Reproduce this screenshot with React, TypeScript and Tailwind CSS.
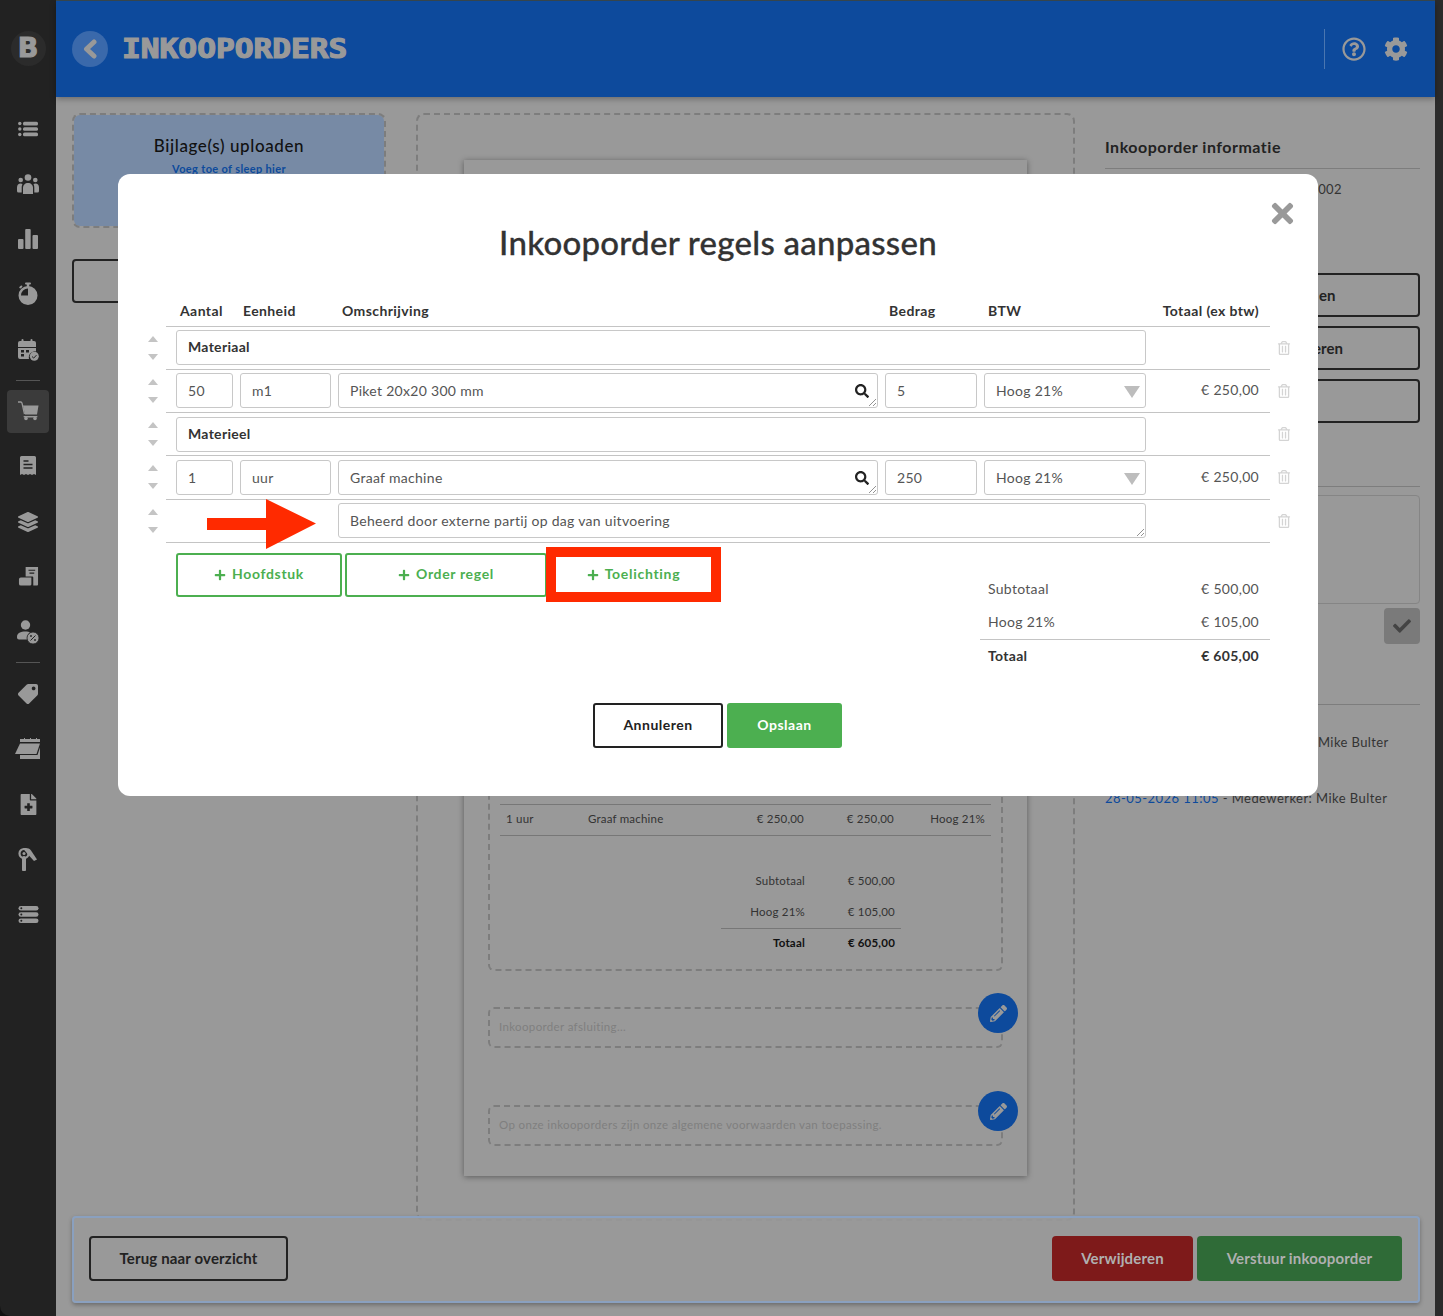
import type { ReactNode } from "react"
import {
  FaCheck,
  FaCog,
  FaFileMedical,
  FaLayerGroup,
  FaPencilAlt,
  FaPlus,
  FaRegQuestionCircle,
  FaRegTrashAlt,
  FaSearch,
  FaTag,
  FaTimes,
} from "react-icons/fa"

const font = "font-['Lato','Noto_Sans',sans-serif]"

function ListIcon() {
  return (
    <svg viewBox="0 0 20 16" className="h-[16px] w-[20px]" fill="currentColor">
      <circle cx="1.800" cy="2.500" r="1.700" />
      <circle cx="1.800" cy="8" r="1.700" />
      <circle cx="1.800" cy="13.500" r="1.700" />
      <rect x="5" y="0.800" width="15" height="3.600" rx="1.500" />
      <rect x="5" y="6.200" width="15" height="3.600" rx="1.500" />
      <rect x="5" y="11.600" width="15" height="3.600" rx="1.500" />
    </svg>
  )
}

function TeamIcon() {
  return (
    <svg viewBox="0 0 22 20" className="h-[20px] w-[22px]" fill="currentColor">
      <circle cx="11" cy="3.500" r="3.300" />
      <circle cx="3.700" cy="6" r="2.300" />
      <circle cx="18.300" cy="6" r="2.300" />
      <path d="M6 20v-6c0-3 2-5 5-5s5 2 5 5v6z" />
      <path d="M0 17v-3.500C0 11 1.500 9.500 3.500 9.500c.8 0 1.500.2 2 .6C5 11 4.700 12.500 4.700 14v4.500H1.500A1.500 1.500 0 0 1 0 17z" />
      <path d="M22 17v-3.500c0-2.500-1.500-4-3.500-4-.8 0-1.500.2-2 .6.500.9.800 2.400.800 3.900v4.500h3.200a1.500 1.500 0 0 0 1.500-1.500z" />
    </svg>
  )
}

function Bars() {
  return (
    <svg viewBox="0 0 22 22" className="h-[22px] w-[22px]" fill="currentColor">
      <rect x="1" y="11" width="5.500" height="10" rx="1" />
      <rect x="8.200" y="1" width="5.500" height="20" rx="1" />
      <rect x="15.500" y="7" width="5.500" height="14" rx="1" />
    </svg>
  )
}

function TimerIcon() {
  return (
    <svg viewBox="0 0 22 24" className="h-[24px] w-[22px]" fill="currentColor">
      <rect x="8" y="0.500" width="6" height="2" rx="1" />
      <rect x="9.800" y="2" width="2.400" height="3" />
      <rect x="2" y="3.800" width="3.500" height="2" rx="1" transform="rotate(-40 4 4.800)" />
      <path fillRule="evenodd" d="M11 4a9.500 9.500 0 1 1 0 19 9.500 9.500 0 0 1 0-19zm0 2.500a7 7 0 0 0-7 7h7z" />
    </svg>
  )
}

function CalendarBadge() {
  return (
    <svg viewBox="0 0 22 22" className="h-[22px] w-[22px]" fill="currentColor">
      <rect x="4.500" y="0" width="2" height="4" rx="1" />
      <rect x="13.500" y="0" width="2" height="4" rx="1" />
      <path d="M1 4a2 2 0 0 1 2-2h14a2 2 0 0 1 2 2v4H1z" />
      <path d="M1 9h18v3.500a6 6 0 0 0-7 7.500H3a2 2 0 0 1-2-2z" />
      <rect x="4" y="11" width="3" height="2.500" fill="#222" />
      <rect x="9" y="11" width="3" height="2.500" fill="#222" />
      <rect x="4" y="15" width="3" height="2.500" fill="#222" />
      <circle cx="17.300" cy="17.300" r="4.500" />
      <path d="M15 17.500l1.700 1.600 2.800-3" stroke="#222" strokeWidth="1" fill="none" />
    </svg>
  )
}

function CartIcon() {
  return (
    <svg viewBox="0 0 22 20" className="h-[20px] w-[22px]" fill="currentColor">
      <path d="M1 1h3l1 1 2.500 11" stroke="currentColor" strokeWidth="1.300" fill="none" />
      <path d="M6 4.500h15.500l-1.500 9H8z" />
      <rect x="6.500" y="15" width="14" height="1.600" rx="0.800" />
      <circle cx="9" cy="17.500" r="1.800" />
      <circle cx="18" cy="17.500" r="1.800" />
    </svg>
  )
}

function ReceiptIcon() {
  return (
    <svg viewBox="0 0 20 20" className="h-[20px] w-[20px]" fill="currentColor">
      <path d="M2 1.500A1.500 1.500 0 0 1 3.500 0h13A1.500 1.500 0 0 1 18 1.500V19l-2-1-2 1-2-1-2 1-2-1-2 1-2-1-2 1z" />
      <path d="M5.500 5h5M5.500 8.500h9M5.500 12h9" stroke="#222" strokeWidth="1.400" />
    </svg>
  )
}

function Invoices() {
  return (
    <svg viewBox="0 0 22 22" className="h-[21px] w-[21px]" fill="currentColor">
      <path d="M8 1h13v18.500a1 1 0 0 1-1 1h-4V12a1 1 0 0 0-1-1H8z" />
      <path d="M1 14a2 2 0 0 1 2-2h11v7a1.500 1.500 0 0 1-1.500 1.500H3a2 2 0 0 1-2-2z" />
      <path d="M11 4.500h7M12 7.500h5" stroke="#222" strokeWidth="1.200" />
    </svg>
  )
}

function UserPercent() {
  return (
    <svg viewBox="0 0 24 25" className="h-[25px] w-[24px]" fill="currentColor">
      <circle cx="9.500" cy="5" r="4.700" />
      <path d="M1 17c0-4 3.500-5.500 8.500-5.500 2 0 3.500.3 4.500.8a7.500 7.500 0 0 0-2.500 7.200H3a2 2 0 0 1-2-2z" />
      <circle cx="17" cy="18" r="6" stroke="#222" strokeWidth="0.800" />
      <path d="M14.500 20.500l5-5" stroke="#222" strokeWidth="1" />
      <circle cx="15" cy="16" r="0.900" fill="#222" />
      <circle cx="19" cy="20" r="0.900" fill="#222" />
    </svg>
  )
}

function Planner() {
  return (
    <svg viewBox="8 6 26 23" className="h-[23px] w-[26px]" fill="currentColor">
      <path d="M13 8h4V7h1v1h5V7h1v1h5V7h1v1h3v3H13z" />
      <path d="M13 12.500h20l-3.500 10.500H8z" />
      <path d="M13 24h17.500L33 16.500V28H13z" />
    </svg>
  )
}

function Tools() {
  return (
    <svg viewBox="0 0 20 24" className="h-[24px] w-[20px]">
      <circle cx="6" cy="6.500" r="4.500" fill="none" stroke="currentColor" strokeWidth="2.200" />
      <circle cx="6" cy="6.500" r="1.500" fill="currentColor" />
      <path d="M6 11v11.500" stroke="currentColor" strokeWidth="4" strokeLinecap="round" />
      <path d="M5 1.500c3-1 6-.5 8 2l6 9-3 1.500-6-6.500" fill="currentColor" />
    </svg>
  )
}

function ServerIcon() {
  return (
    <svg viewBox="0 0 20 17" className="h-[17px] w-[21px]" fill="currentColor">
      <rect x="0" y="0" width="20" height="4.600" rx="2.300" />
      <rect x="0" y="6.200" width="20" height="4.600" rx="2.300" />
      <rect x="0" y="12.400" width="20" height="4.600" rx="2.300" />
      <circle cx="2.800" cy="2.300" r="1" fill="#222" />
      <circle cx="2.800" cy="8.500" r="1" fill="#222" />
      <circle cx="2.800" cy="14.700" r="1" fill="#222" />
    </svg>
  )
}

const navTop = [<ListIcon />, <TeamIcon />, <Bars />, <TimerIcon />, <CalendarBadge />]
const navMiddle = [<CartIcon />, <ReceiptIcon />, <FaLayerGroup size={20} />, <Invoices />, <UserPercent />]
const navBottom = [
  <FaTag size={20} className="scale-x-[-1]" />,
  <Planner />,
  <FaFileMedical size={21} />,
  <Tools />,
  <ServerIcon />,
]

function NavItem({ children, active }: { children: ReactNode; active?: boolean }) {
  return (
    <div
      className={`mx-[7px] flex h-[43px] items-center justify-center rounded-[4px] text-[#999] ${
        active ? "bg-[#3b3b3b]" : ""
      }`}
    >
      {children}
    </div>
  )
}

function Sidebar() {
  return (
    <aside className="flex w-[56px] shrink-0 flex-col rounded-bl-[10px] bg-[#222]">
      <div className="flex h-[96px] items-center justify-center">
        <div className="flex h-[35px] w-[35px] items-center justify-center rounded-full bg-[#2b2b2b] font-['DejaVu_Sans',sans-serif] text-[27px] font-bold text-[#999] [-webkit-text-stroke:1px_#999]">
          B
        </div>
      </div>
      <nav className="flex flex-col gap-[12.250px] pt-[11px]">
        {navTop.map((icon, i) => (
          <NavItem key={i}>{icon}</NavItem>
        ))}
        <div className="mx-[16px] my-[-3.500px] h-px bg-[#555]" />
        {navMiddle.map((icon, i) => (
          <NavItem key={i} active={i === 0}>
            {icon}
          </NavItem>
        ))}
        <div className="mx-[16px] my-[-3.500px] h-px bg-[#555]" />
        {navBottom.map((icon, i) => (
          <NavItem key={i}>{icon}</NavItem>
        ))}
      </nav>
    </aside>
  )
}

function Header() {
  return (
    <header className="z-10 flex h-[96px] shrink-0 items-center bg-[#0d4a9c] pr-[27px] pl-[16px] shadow-[0_2px_6px_rgba(0,0,0,0.3)]">
      <div className="flex h-[36px] w-[36px] items-center justify-center rounded-full bg-[#3a69ab] text-[#999]">
        <svg viewBox="0 0 16 20" className="h-[20px] w-[16px]" fill="none" stroke="currentColor" strokeWidth="5" strokeLinecap="round" strokeLinejoin="round">
          <path d="M12 3l-7.500 7 7.500 7" />
        </svg>
      </div>
      <h1 className="ml-[14px] origin-left scale-x-[1.2] font-['DejaVu_Sans_Mono',monospace] text-[26px] leading-none font-bold text-[#999] [-webkit-text-stroke:1.200px_#999]">
        INKOOPORDERS
      </h1>
      <div className="ml-auto h-[40px] w-px bg-[#4a76b0]" />
      <FaRegQuestionCircle size={24} className="ml-[17px] text-[#999]" />
      <FaCog size={24} className="ml-[18px] text-[#999]" />
    </header>
  )
}

function LeftColumn() {
  return (
    <div className="flex w-[314px] shrink-0 flex-col">
      <div className="h-[115px] rounded-[8px] border-2 border-dashed border-[#7d7d7d] bg-[#778aa5] bg-clip-padding pt-[20px] text-center">
        <p className="text-[17px] leading-[22px] font-medium tracking-[0.6px] text-[#111]">Bijlage(s) uploaden</p>
        <p className="mt-[5px] text-[11px] leading-[14px] font-bold tracking-[0.35px] text-[#0d4a9c]">Voeg toe of sleep hier</p>
      </div>
      <div className="mt-[31px] h-[44px] rounded-[4px] border-2 border-[#222]" />
    </div>
  )
}

function DashedNote({ text }: { text: string }) {
  return (
    <div className="relative h-[41px] rounded-[6px] border-2 border-dashed border-[#7d7d7d] pt-[10px] pl-[9px] text-[11.500px] leading-[16px] tracking-[0.35px] text-[#7f7f7f]">
      {text}
      <div className="absolute top-[-16px] right-[-17px] flex h-[40px] w-[40px] items-center justify-center rounded-full bg-[#0d4a9c] text-[#999]">
        <FaPencilAlt size={17} />
      </div>
    </div>
  )
}

function PaperRow({ label, value, bold }: { label: string; value: string; bold?: boolean }) {
  return (
    <div className={`flex items-center justify-end pb-[2px] ${bold ? "h-[29px] font-bold text-[#111]" : "h-[31px] text-[#333]"}`}>
      <span>{label}</span>
      <span className="mr-[96px] ml-[24px] w-[66px] text-right">{value}</span>
    </div>
  )
}

function Document() {
  return (
    <div className="h-[1108px] w-[659px] shrink-0 rounded-[8px] border-2 border-dashed border-[#7d7d7d] pt-[45px] pr-[46px] pl-[46px]">
      <div className="h-[1016px] bg-[#999] pt-[140px] pr-[24px] pl-[24px] shadow-[0_1px_6px_rgba(0,0,0,0.4)]">
        <div className="flex h-[671px] flex-col justify-end rounded-[6px] border-2 border-dashed border-[#7d7d7d] px-[10px] pb-[11px] text-[11.500px] tracking-[0.2px]">
          <div className="flex h-[32px] items-center border-y border-[#777] px-[6px] pb-[2px] text-[#333]">
            <span className="w-[82px]">1 uur</span>
            <span className="w-[150px]">Graaf machine</span>
            <span className="w-[66px] text-right">€ 250,00</span>
            <span className="ml-[24px] w-[66px] text-right">€ 250,00</span>
            <span className="ml-auto">Hoog 21%</span>
          </div>
          <div className="mt-[30px]">
            <PaperRow label="Subtotaal" value="€ 500,00" />
            <PaperRow label="Hoog 21%" value="€ 105,00" />
            <div className="mr-[90px] ml-[221px] h-px bg-[#777]" />
            <PaperRow label="Totaal" value="€ 605,00" bold />
          </div>
        </div>
        <div className="mt-[36px]">
          <DashedNote text="Inkooporder afsluiting..." />
        </div>
        <div className="mt-[57px]">
          <DashedNote text="Op onze inkooporders zijn onze algemene voorwaarden van toepassing." />
        </div>
      </div>
    </div>
  )
}

function RightColumn() {
  return (
    <div className="ml-[30px] flex w-[315px] shrink-0 flex-col text-[#222]">
      <h2 className="pt-[22px] text-[16px] leading-[24px] font-bold tracking-[0.5px]">Inkooporder informatie</h2>
      <div className="mt-[9px] h-px bg-[#7d7d7d]" />
      <p className="mt-[11px] pr-[78px] text-right text-[13px] leading-[18px] tracking-[0.4px] text-[#333]">002</p>
      <div className="mt-[75px] flex flex-col gap-[9px] text-[15px] font-bold">
        <div className="flex h-[44px] items-center rounded-[4px] border-2 border-[#222] pl-[212px]">en</div>
        <div className="flex h-[44px] items-center rounded-[4px] border-2 border-[#222] pl-[206px]">eren</div>
        <div className="h-[44px] rounded-[4px] border-2 border-[#222]" />
      </div>
      <div className="mt-[63px] h-px bg-[#7d7d7d]" />
      <div className="mt-[8px] h-[109px] rounded-[4px] border border-[#858585]" />
      <div className="mt-[4px] flex h-[36px] w-[36px] items-center justify-center self-end rounded-[4px] bg-[#7a7a7a] text-[#444]">
        <FaCheck size={18} />
      </div>
      <div className="mt-[60px] h-px bg-[#7d7d7d]" />
      <p className="mt-[28px] pl-[213px] text-[13px] leading-[18px] tracking-[0.4px] text-[#333]">Mike Bulter</p>
      <p className="mt-[38px] text-[13px] leading-[18px] tracking-[0.45px] text-[#333]">
        <span className="text-[#0d4a9c]">28-05-2026 11:05</span> - Medewerker: Mike Bulter
      </p>
    </div>
  )
}

function Footer() {
  return (
    <div className="absolute top-[1216px] left-[72px] flex h-[87px] w-[1348px] items-start rounded-[4px] border-2 border-[#8aa0bf] bg-[#999]/90 pt-[18px] pr-[16px] pl-[15px] text-[15px] font-bold tracking-[0.15px] shadow-[0_2px_4px_rgba(0,0,0,0.3)]">
      <div className="flex h-[45px] w-[199px] items-center justify-center rounded-[4px] border-2 border-[#222] text-[#222]">
        Terug naar overzicht
      </div>
      <div className="ml-auto flex h-[45px] w-[141px] items-center justify-center rounded-[4px] bg-[#7e1a1a] text-[#b0b0b0]">
        Verwijderen
      </div>
      <div className="ml-[4px] flex h-[45px] w-[205px] items-center justify-center rounded-[4px] bg-[#2f6b37] text-[#b0b0b0]">
        Verstuur inkooporder
      </div>
    </div>
  )
}

function Grip() {
  return (
    <svg viewBox="0 0 8 8" className="absolute right-px bottom-px h-[8px] w-[8px]" stroke="#777" strokeWidth="0.8">
      <path d="M1 8l7-7M5 8l3-3" />
    </svg>
  )
}

function Field({ children, bold, grip, icon, arrow }: { children?: ReactNode; bold?: boolean; grip?: boolean; icon?: boolean; arrow?: boolean }) {
  return (
    <div
      className={`relative flex h-[35px] items-center rounded-[3px] border border-[#c8c8c8] bg-white pl-[11px] ${
        bold ? "pb-[2px] font-bold text-[#333]" : "text-[#555]"
      }`}
    >
      {children}
      {icon && <FaSearch size={14} className="absolute top-[10px] right-[8px] text-[#222]" />}
      {arrow && <div className="absolute top-[12px] right-[5px] h-0 w-0 border-x-[8px] border-t-[12px] border-x-transparent border-t-[#bdbdbd]" />}
      {grip && <Grip />}
    </div>
  )
}

function Mover() {
  return (
    <div className="mb-[2px] flex w-[48px] shrink-0 flex-col items-end gap-[12px] pr-[8px]">
      <div className="h-0 w-0 border-x-[5px] border-b-[6px] border-x-transparent border-b-[#c4c4c4]" />
      <div className="h-0 w-0 border-x-[5px] border-t-[6px] border-x-transparent border-t-[#c4c4c4]" />
    </div>
  )
}

function Row({ children, total, tall, low }: { children: ReactNode; total?: string; tall?: boolean; low?: boolean }) {
  return (
    <div className={`flex items-center ${tall ? "h-[44px]" : "h-[43px]"}`}>
      <Mover />
      <div
        className={`grid h-full w-[1104px] grid-cols-[57px_91px_540px_92px_162px_1fr] items-start gap-x-[7px] border-b border-[#c4c4c4] pr-[11px] pl-[10px] ${
          low ? "pt-[4px]" : "pt-[3px]"
        }`}
      >
        {children}
        <span className="col-start-6 -mt-px text-right leading-[35px] text-[#555]">{total}</span>
      </div>
      <FaRegTrashAlt size={14} className="mb-[2px] ml-[7px] text-[#d4d4d4]" />
    </div>
  )
}

function GreenButton({ label, width }: { label: string; width: string }) {
  return (
    <div className={`flex h-[44px] ${width} items-center justify-center gap-[6px] rounded-[3px] border-2 border-[#4caf50] pb-[3px] font-bold tracking-[0.65px] text-[#4caf50]`}>
      <FaPlus size={12} className="mt-[3px]" />
      {label}
    </div>
  )
}

function Modal() {
  return (
    <div className="absolute top-[174px] left-[118px] z-20 h-[622px] w-[1200px] rounded-[12px] bg-white text-[14px] tracking-[0.3px]">
      <FaTimes size={31} className="absolute top-[24px] right-[20px] text-[#999]" />
      <h2 className="pt-[46px] text-center text-[33px] leading-[44px] font-medium tracking-[0.25px] text-[#333] [-webkit-text-stroke:0.3px_#333]">
        Inkooporder regels aanpassen
      </h2>

      <div className="mt-[30px] ml-[48px] grid h-[33px] w-[1104px] grid-cols-[63px_99px_547px_99px_1fr_auto] items-center border-b border-[#c4c4c4] pr-[11px] pl-[14px] font-bold tracking-[0.4px] text-[#333]">
        <span>Aantal</span>
        <span>Eenheid</span>
        <span>Omschrijving</span>
        <span>Bedrag</span>
        <span>BTW</span>
        <span>Totaal (ex btw)</span>
      </div>

      <Row>
        <div className="col-span-5">
          <Field bold>Materiaal</Field>
        </div>
      </Row>
      <Row total="€ 250,00">
        <Field>50</Field>
        <Field>m1</Field>
        <Field icon grip>Piket 20x20 300 mm</Field>
        <Field>5</Field>
        <Field arrow>Hoog 21%</Field>
      </Row>
      <Row low>
        <div className="col-span-5">
          <Field bold>Materieel</Field>
        </div>
      </Row>
      <Row total="€ 250,00" tall low>
        <Field>1</Field>
        <Field>uur</Field>
        <Field icon grip>Graaf machine</Field>
        <Field>250</Field>
        <Field arrow>Hoog 21%</Field>
      </Row>
      <Row>
        <div className="col-span-3 col-start-3">
          <Field grip>Beheerd door externe partij op dag van uitvoering</Field>
        </div>
      </Row>

      <div className="mt-[10px] ml-[58px] flex items-start">
        <GreenButton label="Hoofdstuk" width="w-[166px]" />
        <div className="ml-[3px]">
          <GreenButton label="Order regel" width="w-[202px]" />
        </div>
        <div className="-mt-[6px] -ml-px flex h-[55px] w-[175px] items-center justify-center border-[10px] border-[#ff2a00] pb-[2px] font-bold tracking-[0.7px] text-[#4caf50]">
          <FaPlus size={12} className="mt-[2px] mr-[6px]" />
          Toelichting
        </div>
        <div className="mt-[19px] ml-[259px] w-[290px] text-[#555]">
          <div className="flex h-[33px] items-center justify-between pr-[11px] pl-[8px]">
            <span>Subtotaal</span>
            <span>€ 500,00</span>
          </div>
          <div className="flex h-[35px] items-center justify-between border-b border-[#c4c4c4] pr-[11px] pb-[2px] pl-[8px]">
            <span>Hoog 21%</span>
            <span>€ 105,00</span>
          </div>
          <div className="flex h-[34px] items-center justify-between pr-[11px] pb-[3px] pl-[8px] font-bold text-[#333]">
            <span>Totaal</span>
            <span>€ 605,00</span>
          </div>
        </div>
      </div>

      <div className="absolute top-[529px] left-[475px] flex gap-[4px] font-bold tracking-[0.5px]">
        <div className="flex h-[45px] w-[130px] items-center justify-center rounded-[3px] border-2 border-[#222] pb-[3px] text-[#222]">Annuleren</div>
        <div className="flex h-[45px] w-[115px] items-center justify-center rounded-[3px] bg-[#4caf50] pb-[3px] text-white">Opslaan</div>
      </div>

      <svg viewBox="0 0 110 50" className="absolute top-[325px] left-[89px] h-[50px] w-[110px]" fill="#ff2a00">
        <path d="M0 19h59V0l50 24.500L59 50V31H0z" />
      </svg>
    </div>
  )
}

export default function App() {
  return (
    <div className={`relative flex h-[1316px] w-[1443px] overflow-hidden bg-[#111] ${font}`}>
      <Sidebar />
      <div className="flex min-w-0 flex-1 flex-col border-t border-[#3a4a50] bg-[#999]">
        <Header />
        <main className="flex flex-1 items-start pt-[16px] pl-[16px]">
          <LeftColumn />
          <div className="ml-[30px]">
            <Document />
          </div>
          <RightColumn />
        </main>
      </div>
      <div className="w-[8px] shrink-0 bg-[#2b2b2b]" />
      <Footer />
      <Modal />
    </div>
  )
}
